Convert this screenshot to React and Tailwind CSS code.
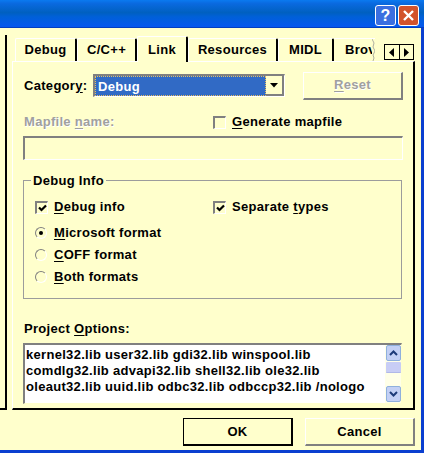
import React from 'react';

const ui = "font-['Liberation_Sans',Arial,sans-serif] font-bold text-[13px] tracking-[0.3px] leading-[16px]";
const disabled = 'text-[#a0a0a0] [text-shadow:1px_1px_0_#ffffff]';

function U({ children }) {
  return <span className="underline underline-offset-2 decoration-1">{children}</span>;
}

function Tab({ children, active, width }) {
  return (
    <div
      className={
        active
          ? 'relative z-10 h-[26px] -mb-px flex items-center justify-center rounded-t-[2px] border-t border-l border-white bg-[#ffffcc] border-r-2 border-r-black'
          : 'h-[23px] flex items-center justify-center rounded-t-[2px] border-t border-l border-white border-r-2 border-r-black'
      }
      style={{ width }}
    >
      {children}
    </div>
  );
}

function Check({ checked }) {
  return (
    <span className="w-[13px] h-[13px] shrink-0 bg-[#ffffcc] border-t-2 border-l-2 border-[#808080] border-r border-b border-r-white border-b-white flex items-center justify-center">
      {checked && (
        <svg width="9" height="8" viewBox="0 0 9 8">
          <path d="M1 3.5l2.5 2.5L8 1.5" fill="none" stroke="#000" strokeWidth="2.2" />
        </svg>
      )}
    </span>
  );
}

function Radio({ checked }) {
  return (
    <span className="w-[12px] h-[12px] shrink-0 rounded-full bg-[#ffffcc] border border-t-[#808080] border-l-[#808080] border-r-white border-b-white flex items-center justify-center">
      {checked && <span className="w-[4px] h-[4px] rounded-full bg-black" />}
    </span>
  );
}

function ScrollBtn({ up }) {
  return (
    <div className="w-[15px] h-[16px] shrink-0 bg-[#c3d0f5] border border-[#8fb0dd] rounded-[2px] flex items-center justify-center">
      <svg width="9" height="6" viewBox="0 0 9 6">
        <path d={up ? 'M1 5l3.5-3.5L8 5' : 'M1 1l3.5 3.5L8 1'} fill="none" stroke="#1c3a78" strokeWidth="2" />
      </svg>
    </div>
  );
}

export default function App() {
  return (
    <div className={`${ui} w-[424px] h-[453px] overflow-hidden bg-[#ffffcc] text-black flex flex-col`}>
      {/* title bar */}
      <div className="h-[28px] shrink-0 bg-[linear-gradient(#0a7af0_0%,#0a6ae0_12%,#0060c0_45%,#0060d8_60%,#0558ee_95%,#0030a8_100%)] flex justify-end items-start pt-[5px] pr-[5px] gap-[2px]">
        <div className="w-[21px] h-[21px] rounded-[3px] border border-white bg-[#3a6fe0] flex items-center justify-center">
          <span className="text-white text-[16px] leading-none font-bold">?</span>
        </div>
        <div className="w-[21px] h-[21px] rounded-[3px] border border-white bg-[#d2532c] flex items-center justify-center">
          <svg width="13" height="13" viewBox="0 0 13 13">
            <path d="M2 2l9 9M11 2l-9 9" stroke="#fff" strokeWidth="2.4" />
          </svg>
        </div>
      </div>

      <div className="flex-1 flex min-h-0">
        {/* clipped previous page on the left */}
        <div className="w-[7px] h-[382px] shrink-0 flex flex-col">
          <div className="h-[7px]" />
          <div className="flex-1 border-r-2 border-b-2 border-black" />
        </div>
        <div className="w-[5px] shrink-0" />

        <div className="flex flex-col w-[403px] shrink-0">
          {/* tab strip */}
          <div className="mt-[8px] h-[25px] flex items-end pl-[3px]">
            <Tab width="62px">Debug</Tab>
            <Tab width="60px">C/C++</Tab>
            <Tab active width="51px">Link</Tab>
            <Tab width="90px">Resources</Tab>
            <Tab width="56px">MIDL</Tab>
            <div className="w-[41px] h-[23px] border-t border-white flex items-center">
              <div className="w-[38px] overflow-hidden pl-[11px]">Brov</div>
              <svg className="shrink-0" width="3" height="22" viewBox="0 0 3 22">
                <path d="M0 0l2 4-1 4 2 4-2 4 1 3-1 3" fill="none" stroke="#b0b0a0" />
              </svg>
            </div>
            <div className="ml-[9px] mb-[1px] w-[30px] h-[16px] flex border border-black bg-[#ffffcc]">
              <div className="flex-1 border-r border-black flex items-center justify-center">
                <svg width="6" height="9" viewBox="0 0 6 9"><path d="M5 0v9L0 4.5z" fill="#000" /></svg>
              </div>
              <div className="flex-1 flex items-center justify-center">
                <svg width="6" height="9" viewBox="0 0 6 9"><path d="M1 0v9l5-4.5z" fill="#000" /></svg>
              </div>
            </div>
          </div>

          {/* tab page */}
          <div className="h-[349px] border-t border-l border-white border-r-2 border-b-2 border-r-black border-b-black pl-[10px] pr-[10px] flex flex-col">
            <div className="mt-[12px] flex items-center h-[23px]">
              <span className="ml-[1px] w-[69px]">Categor<U>y</U>:</span>
              <div className="w-[192px] h-[23px] flex items-center bg-white border-t-2 border-l-2 border-[#808080] border-r border-b border-r-white border-b-white">
                <div className="flex-1 h-full bg-[#316ac5] text-white border border-dotted border-[#e8c060] pl-[2px] leading-[19px]">Debug</div>
                <div className="w-[18px] h-full bg-[#ffffcc] border-r-2 border-b-2 border-[#808080] flex items-center justify-center">
                  <svg width="8" height="5" viewBox="0 0 8 5"><path d="M0 0h8L4 4.5z" fill="#000" /></svg>
                </div>
              </div>
              <div className={`ml-[18px] w-[100px] h-[28px] shrink-0 border-t border-l border-white border-r-2 border-b-2 border-r-[#808080] border-b-[#808080] flex items-center justify-center ${disabled}`}>
                <span><U>R</U>eset</span>
              </div>
            </div>

            <div className="mt-[16px] flex items-center h-[18px]">
              <span className={`ml-[1px] w-[189px] ${disabled}`}>Mapfile <U>n</U>ame:</span>
              <Check />
              <span className="ml-[6px]"><U>G</U>enerate mapfile</span>
            </div>

            <div className="mt-[5px] w-[380px] h-[24px] shrink-0 border-t-2 border-l-2 border-[#808080] border-r border-b border-r-white border-b-white" />

            {/* Debug Info group */}
            <div className="relative mt-[20px] w-[379px] h-[119px] shrink-0 border border-[#9c9c9c] pl-[11px] pt-[18px]">
              <span className="absolute -top-[8px] left-[7px] px-[2px] bg-[#ffffcc]">Debug Info</span>
              <div className="flex items-center h-[16px]">
                <span className="flex items-center gap-[6px] w-[178px]">
                  <Check checked />
                  <span><U>D</U>ebug info</span>
                </span>
                <Check checked />
                <span className="ml-[6px]">Separate <U>t</U>ypes</span>
              </div>
              <div className="mt-[10px] flex flex-col gap-[6px]">
                <div className="flex items-center gap-[7px] h-[16px]"><Radio checked /><span><U>M</U>icrosoft format</span></div>
                <div className="flex items-center gap-[7px] h-[16px]"><Radio /><span><U>C</U>OFF format</span></div>
                <div className="flex items-center gap-[7px] h-[16px]"><Radio /><span><U>B</U>oth formats</span></div>
              </div>
            </div>

            <div className="mt-[22px] ml-[1px] h-[16px] shrink-0">Project <U>O</U>ptions:</div>
            <div className="mt-[6px] w-[379px] h-[61px] shrink-0 flex bg-white border-t-2 border-l-2 border-[#808080] border-r border-b border-r-[#ffffcc] border-b-[#ffffcc]">
              <div className="flex-1 pl-[1px] pt-[2px] whitespace-nowrap overflow-hidden">
                <div>kernel32.lib user32.lib gdi32.lib winspool.lib</div>
                <div>comdlg32.lib advapi32.lib shell32.lib ole32.lib</div>
                <div>oleaut32.lib uuid.lib odbc32.lib odbccp32.lib /nologo</div>
              </div>
              <div className="w-[16px] bg-[#ffffe8] flex flex-col pl-[1px] pb-[1px]">
                <ScrollBtn up />
                <div className="mt-[1px] h-[11px] bg-[#c8cdf5] rounded-[1px] w-[15px] border-b border-[#b0b8e8]" />
                <div className="flex-1" />
                <ScrollBtn />
              </div>
            </div>
          </div>

          {/* buttons */}
          <div className="mt-[8px] flex justify-end gap-[12px]">
            <div className="w-[110px] h-[28px] border border-black border-r-2 border-b-2 flex items-center justify-center">OK</div>
            <div className="w-[110px] h-[28px] border-t border-l border-white border-r-2 border-b-2 border-r-[#808080] border-b-[#808080] flex items-center justify-center">Cancel</div>
          </div>
        </div>

        <div className="w-[9px] shrink-0 flex">
          <div className="w-[6px]" />
          <div className="w-[3px] bg-[#0a3fd0]" />
        </div>
      </div>
      <div className="h-[3px] shrink-0 bg-[#0a3fd0]" />
    </div>
  );
}
